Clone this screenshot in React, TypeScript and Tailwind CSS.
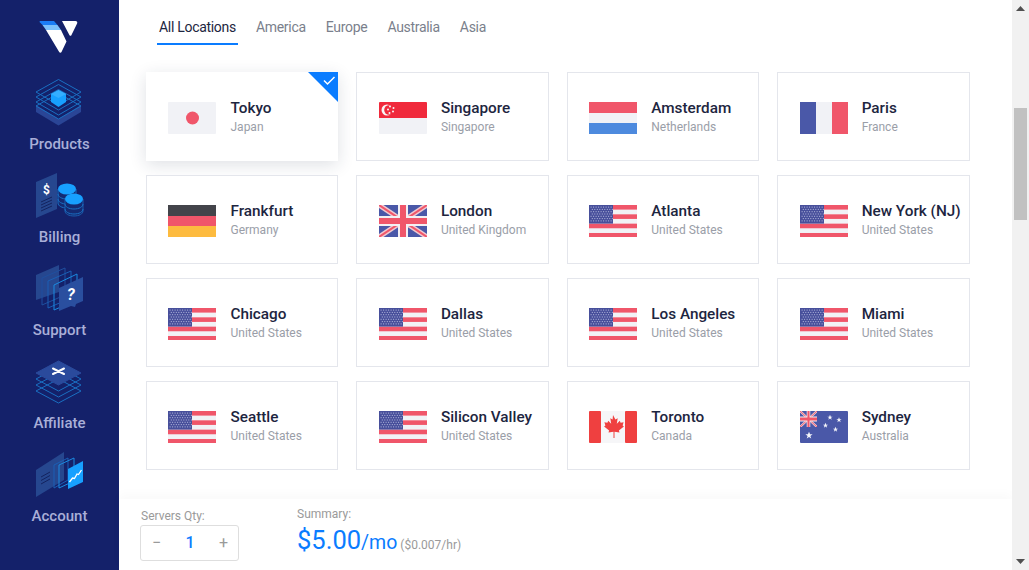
import type { ReactNode } from "react";

const TABS = ["All Locations", "America", "Europe", "Australia", "Asia"];

function FlagSvg({ children }: { children: ReactNode }) {
    return (
        <svg width="48" height="32" viewBox="0 0 48 32" className="block shrink-0 mt-[3px]">
            {children}
        </svg>
    );
}

function UnionJack({ w = 48, h = 32 }: { w?: number; h?: number }) {
    return (
        <g>
            <rect width={w} height={h} fill="#4a58a8" />
            <path d={`M0 0L${w} ${h}M${w} 0L0 ${h}`} stroke="#f1c9cf" strokeWidth={5} />
            <path d={`M0 0L${w} ${h}M${w} 0L0 ${h}`} stroke="#f0566a" strokeWidth={2} />
            <path d={`M${w / 2} 0V${h}M0 ${h / 2}H${w}`} stroke="#f3f0f3" strokeWidth={10} />
            <path d={`M${w / 2} 0V${h}M0 ${h / 2}H${w}`} stroke="#f0566a" strokeWidth={6} />
        </g>
    );
}

function Japan() {
    return (
        <FlagSvg>
            <rect width="48" height="32" rx="1" fill="#f1f2f6" />
            <circle cx="24.5" cy="16" r="6.5" fill="#f0566a" />
        </FlagSvg>
    );
}

function Singapore() {
    return (
        <FlagSvg>
            <rect width="48" height="32" rx="1" fill="#f1f2f6" />
            <path d="M0 1a1 1 0 0 1 1-1h46a1 1 0 0 1 1 1v15H0z" fill="#f02a3c" />
            <circle cx="8" cy="8" r="5.500" fill="#f7f7f7" />
            <circle cx="10" cy="8" r="4.800" fill="#f02a3c" />
            {[[11, 4.5], [14.5, 6], [14, 9.5], [10.5, 11], [9, 7.5]].map(([x, y]) => (
                <circle key={x + "-" + y} cx={x} cy={y} r="1" fill="#f7f7f7" />
            ))}
        </FlagSvg>
    );
}

function Netherlands() {
    return (
        <FlagSvg>
            <rect width="48" height="11" fill="#f0566a" />
            <rect y="11" width="48" height="10" fill="#f1f2f6" />
            <rect y="21" width="48" height="11" fill="#4d8ade" />
        </FlagSvg>
    );
}

function France() {
    return (
        <FlagSvg>
            <rect width="16" height="32" fill="#4a58a8" />
            <rect x="16" width="16" height="32" fill="#f1f2f6" />
            <rect x="32" width="16" height="32" fill="#f0566a" />
        </FlagSvg>
    );
}

function Germany() {
    return (
        <FlagSvg>
            <rect width="48" height="11" fill="#43444a" />
            <rect y="11" width="48" height="10" fill="#f0566a" />
            <rect y="21" width="48" height="11" fill="#fdbb3f" />
        </FlagSvg>
    );
}

function Uk() {
    return (
        <FlagSvg>
            <UnionJack />
        </FlagSvg>
    );
}

function Usa() {
    const dots: ReactNode[] = [];
    for (let r = 0; r < 7; r++) {
        for (let c = 0; c < 9; c++) {
            dots.push(<rect key={r + "-" + c} x={1.6 + c * 2.5 + (r % 2) * 1.2} y={1.6 + r * 2.3} width="1" height="1" fill="#b9bde0" />);
        }
    }
    return (
        <FlagSvg>
            <rect width="48" height="32" rx="1" fill="#f1f2f6" />
            {[0, 1, 2, 3].map((i) => (
                <rect key={i} y={i * 9.33} width="48" height="4.6" fill="#f0566a" />
            ))}
            <rect width="24" height="18.6" fill="#474f9b" />
            {dots}
        </FlagSvg>
    );
}

function Canada() {
    return (
        <FlagSvg>
            <rect width="48" height="32" rx="1" fill="#f6f6f8" />
            <rect width="12" height="32" rx="1" fill="#ef4040" />
            <rect x="36" width="12" height="32" rx="1" fill="#ef4040" />
            <path
                d="M24 4l2.4 4.4 2.3-1.2-.9 5.6 3-3 .8 1.9 3-.5-1 3.400 1.300.8-5 4.100.6 1.900-5-.7V27h-1v-6.300l-5 .7.600-1.900-5-4.100 1.300-.8-1-3.400 3 .5.800-1.900 3 3-.9-5.600 2.300 1.200z"
                fill="#ef4040"
            />
        </FlagSvg>
    );
}

function Australia() {
    return (
        <FlagSvg>
            <rect width="48" height="32" rx="1" fill="#4a58a8" />
            <svg width="17" height="16" viewBox="0 0 48 32" preserveAspectRatio="none">
                <UnionJack />
            </svg>
            {[[9, 24.5, 3.8], [30, 6.5, 2.8], [39, 9, 2.8], [25.5, 14.5, 2.8], [35.5, 18.5, 2.8]].map(([x, y, r]) => (
                <path
                    key={x}
                    transform={`translate(${x} ${y}) scale(${r})`}
                    d="M0-1L.29-.31H.95L.36.12.59.81 0 .38-.59.81-.36.12-.95-.31H-.29z"
                    fill="#f4f5fa"
                />
            ))}
        </FlagSvg>
    );
}

const LOCATIONS = [
    { city: "Tokyo", country: "Japan", Flag: Japan, selected: true },
    { city: "Singapore", country: "Singapore", Flag: Singapore },
    { city: "Amsterdam", country: "Netherlands", Flag: Netherlands },
    { city: "Paris", country: "France", Flag: France },
    { city: "Frankfurt", country: "Germany", Flag: Germany },
    { city: "London", country: "United Kingdom", Flag: Uk },
    { city: "Atlanta", country: "United States", Flag: Usa },
    { city: "New York (NJ)", country: "United States", Flag: Usa },
    { city: "Chicago", country: "United States", Flag: Usa },
    { city: "Dallas", country: "United States", Flag: Usa },
    { city: "Los Angeles", country: "United States", Flag: Usa },
    { city: "Miami", country: "United States", Flag: Usa },
    { city: "Seattle", country: "United States", Flag: Usa },
    { city: "Silicon Valley", country: "United States", Flag: Usa },
    { city: "Toronto", country: "Canada", Flag: Canada },
    { city: "Sydney", country: "Australia", Flag: Australia },
];

function Logo() {
    return (
        <svg width="39" height="33" viewBox="0 0 39 33" className="block">
            <path d="M.5 1C.5.400 1 0 1.500 0H15l3.500 4h-15z" fill="#1a7cf5" />
            <path d="M3.500 4h15L22 9H7z" fill="#7cc0fb" />
            <path d="M7 9h15l5.500 11.500-5 10.500a1.300 1.300 0 0 1-2.300 0z" fill="#ffffff" />
            <path d="M23 0h13.500c1.300 0 2.300 1.300 1.600 2.500L32.500 14a1.200 1.200 0 0 1-2 .2z" fill="#ffffff" />
        </svg>
    );
}

function ProductsIcon() {
    return (
        <svg width="48" height="48" viewBox="0 0 48 48" className="block">
            <path d="M1 26v7l22.500 13.500L46 33v-7L23.500 40z" fill="#2a4596" />
            {[13, 18, 23, 27].map((y) => (
                <path key={y} d={`M23.500 ${y - 12.500}L46 ${y}L23.500 ${y + 13}L1 ${y}z`} fill="none" stroke="#1a6fc2" strokeWidth="1" strokeLinejoin="round" />
            ))}
            <path d="M16 15l7.500-4 7.500 4v8l-7.500 5-7.500-5z" fill="#17a0ff" />
            <path d="M16 15l7.500-4 7.500 4-7.500 4z" fill="#34aeff" />
        </svg>
    );
}

function BillingIcon() {
    return (
        <svg width="48" height="48" viewBox="0 0 48 48" className="block">
            <path d="M0 10L21 1v36L0 46z" fill="#26478f" />
            <text x="7" y="21.500" fontFamily="Roboto, sans-serif" fontSize="12" fontWeight="700" fill="#ffffff">$</text>
            <path d="M5 30l11-5M5 33l11-5M5 36l11-5M5 39l11-5" stroke="#13235f" strokeWidth="1" />
            <path d="M22 17v14c0 3 4 5 9 5s9-2 9-5V17" fill="#142a72" stroke="#1a6fc2" strokeWidth="1" />
            <path d="M22 22c0 3 4 5 9 5M22 27c0 3 4 5 9 5" fill="none" stroke="#1a6fc2" strokeWidth="1" />
            <ellipse cx="31" cy="17" rx="9" ry="5.500" fill="#17a0ff" />
            <path d="M29 27v12c0 3 4 5 9 5s9-2 9-5V27" fill="#142a72" stroke="#1a5cad" strokeWidth="1" />
            <path d="M29 32c0 3 4 5 9 5s9-2 9-5M29 37c0 3 4 5 9 5s9-2 9-5" fill="none" stroke="#1a6fc2" strokeWidth="1" />
            <ellipse cx="38" cy="27" rx="9" ry="5.500" fill="#17a0ff" />
        </svg>
    );
}

function SupportIcon() {
    return (
        <svg width="48" height="48" viewBox="0 0 48 48" className="block">
            <path d="M0 10L23 0v27L0 35z" fill="#26478f" />
            <path d="M6 13L29 3v27L6 40z" fill="none" stroke="#1f4f9f" strokeWidth="1" />
            <path d="M12 16L35 6v27L12 43z" fill="none" stroke="#1a5fb5" strokeWidth="1" />
            <path d="M18 20L41 9v26L18 45z" fill="none" stroke="#1a8ae0" strokeWidth="1" />
            <path d="M23 23l24-11v24l-7 3-1 3-4-1-12 5z" fill="#2a4f9f" />
            <text x="31" y="35" fontFamily="Roboto, sans-serif" fontSize="16" fontWeight="700" fontStyle="italic" fill="#ffffff">?</text>
        </svg>
    );
}

function AffiliateIcon() {
    return (
        <svg width="48" height="48" viewBox="0 0 48 48" className="block">
            {[33, 27, 21].map((y) => (
                <path key={y} d={`M23.500 ${y - 12}L46 ${y}L23.500 ${y + 12}L1 ${y}z`} fill="none" stroke="#1a6fc2" strokeWidth="1" strokeLinejoin="round" />
            ))}
            <path d="M23.500 3L46 15L23.500 27L1 15z" fill="#2a4a9c" stroke="#2a4a9c" strokeLinejoin="round" />
            <path d="M18 10.500l11 5.500M29 10.500l-11 5.500" stroke="#ffffff" strokeWidth="2" strokeLinecap="round" />
        </svg>
    );
}

function AccountIcon() {
    return (
        <svg width="48" height="48" viewBox="0 0 48 48" className="block">
            <path d="M0 19L28 1v28L0 46z" fill="#26478f" />
            <path d="M5 26l9-5M5 29.500l9-5M5 33l9-5" stroke="#13235f" strokeWidth="1" />
            <path d="M18 14l14-7v22l-14 8z" fill="none" stroke="#1a5fb5" strokeWidth="1" />
            <path d="M23 14l15-7v23l-15 7z" fill="none" stroke="#1a8ae0" strokeWidth="1" />
            <path d="M32 18l15-8v21l-15 7z" fill="#17a0ff" />
            <path d="M33.500 31l3-4 2 .500 2.500-4.500 1.500.500 3-4.500" fill="none" stroke="#ffffff" strokeWidth="1.300" />
        </svg>
    );
}

const NAV = [
    { label: "Products", Icon: ProductsIcon },
    { label: "Billing", Icon: BillingIcon },
    { label: "Support", Icon: SupportIcon },
    { label: "Affiliate", Icon: AffiliateIcon },
    { label: "Account", Icon: AccountIcon },
];

function LocationCard({ city, country, Flag, selected }: (typeof LOCATIONS)[number]) {
    return (
        <div
            className={
                selected
                    ? "relative h-[89px] flex items-center gap-[14.1px] pl-[22.4px] bg-white shadow-[0_4px_16px_rgba(30,40,70,0.14)]"
                    : "relative h-[89px] flex items-center gap-[14.1px] pl-[21.4px] bg-white border border-[#e4e6ec]"
            }
        >
            <Flag />
            <div className="min-w-0">
                <div className="text-[15.3px] leading-5 font-medium text-[#1d2540] whitespace-nowrap">{city}</div>
                <div className="text-xs leading-4 mt-px text-[#9a9ea8] whitespace-nowrap">{country}</div>
            </div>
            {selected && (
                <svg width="30" height="30" viewBox="0 0 30 30" className="absolute top-0 right-0">
                    <path d="M0 0H30V30z" fill="#0a7cff" />
                    <path d="M16 8.500l3.500 3.500 7-7" fill="none" stroke="#ffffff" strokeWidth="1.500" />
                </svg>
            )}
        </div>
    );
}

export default function App() {
    return (
        <div className="h-screen w-full flex overflow-hidden bg-white font-['Roboto',sans-serif]">
            {/* Sidebar */}
            <aside className="w-[119px] shrink-0 bg-[#14216a] flex flex-col items-center pt-[21px]">
                <div className="mb-[25px] ml-[-3px]">
                    <Logo />
                </div>
                {NAV.map(({ label, Icon }) => (
                    <div key={label} className="h-[93px] shrink-0 flex flex-col items-center">
                        <Icon />
                        <div className="mt-[7px] text-[15px] leading-5 font-medium text-[#a9afd8]">{label}</div>
                    </div>
                ))}
            </aside>

            {/* Main */}
            <main className="flex-1 min-w-0 flex flex-col">
                <div className="flex-1 min-h-0 overflow-hidden">
                    <nav className="flex gap-4 pl-[38px] pt-[17px]">
                        {TABS.map((tab, i) => (
                            <div
                                key={tab}
                                className={
                                    i === 0
                                        ? "px-[2px] pb-[6px] text-sm tracking-[-0.3px] leading-5 text-[#1d2540] border-b-2 border-[#0a7cff]"
                                        : "px-[2px] pb-[6px] text-sm tracking-[-0.3px] leading-5 text-[#7a7f8c] border-b-2 border-transparent"
                                }
                            >
                                {tab}
                            </div>
                        ))}
                    </nav>
                    <div className="grid grid-cols-[repeat(4,192.4px)] gap-x-[18px] gap-y-[14px] pl-[27px] mt-[27px]">
                        {LOCATIONS.map((loc) => (
                            <LocationCard key={loc.city} {...loc} />
                        ))}
                    </div>
                </div>

                {/* Footer */}
                <div className="h-[71px] shrink-0 flex bg-white pl-[21px] shadow-[0_-5px_10px_rgba(0,0,0,0.025)]">
                    <div className="w-[157px] shrink-0 pt-[9px]">
                        <div className="pl-px text-xs leading-4 text-[#9a9a9a]">Servers Qty:</div>
                        <div className="mt-[1px] w-[99px] h-[36px] flex items-center justify-between pl-[11px] pr-[10px] border border-[#dedede] rounded-[3px]">
                            <span className="text-base leading-none text-[#9a9a9a]">−</span>
                            <span className="text-base leading-none font-medium text-[#0a7cff]">1</span>
                            <span className="text-base leading-none text-[#9a9a9a]">+</span>
                        </div>
                    </div>
                    <div className="pt-[7px]">
                        <div className="text-xs leading-4 text-[#9a9a9a]">Summary:</div>
                        <div className="flex items-baseline mt-[2px] leading-8">
                            <span className="text-[25.5px] text-[#0a7cff]">$5.00</span>
                            <span className="text-[19.5px] text-[#0a7cff]">/mo</span>
                            <span className="ml-[3px] text-xs text-[#9a9a9a]">($0.007/hr)</span>
                        </div>
                    </div>
                </div>
            </main>

            {/* Scrollbar */}
            <div className="w-[17px] shrink-0 bg-[#f1f1f1] flex flex-col items-center">
                <svg width="9" height="5" viewBox="0 0 9 5" className="mt-[6px] block">
                    <path d="M4.500 0L9 5H0z" fill="#505050" />
                </svg>
                <div className="w-[13px] h-[112px] mt-[97px] bg-[#c1c1c1]" />
                <svg width="9" height="5" viewBox="0 0 9 5" className="mt-auto mb-[6px] block">
                    <path d="M0 0H9L4.500 5z" fill="#505050" />
                </svg>
            </div>
        </div>
    );
}
